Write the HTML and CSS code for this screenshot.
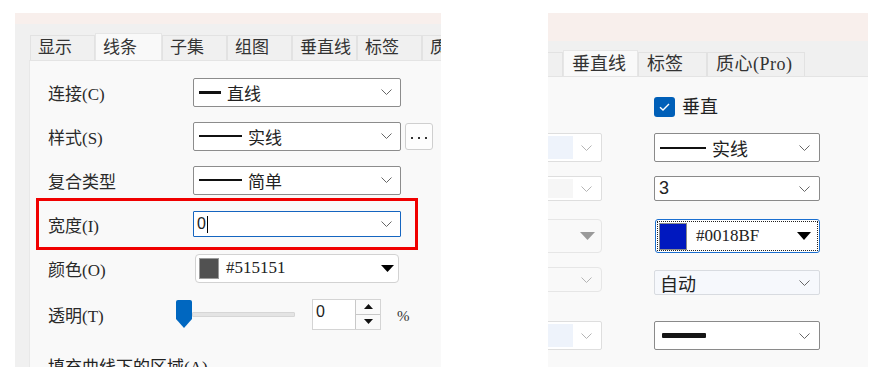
FILE: index.html
```html
<!DOCTYPE html>
<html lang="zh-CN">
<head>
<meta charset="utf-8">
<title>线条设置</title>
<link rel="stylesheet" href="styles.css">
</head>
<body>
<div class="stage">
  <section class="panel panel-left">
    <div class="titlebar"></div>
    <div class="tabbar">
      <div class="tab">显示</div>
      <div class="tab active">线条</div>
      <div class="tab">子集</div>
      <div class="tab">组图</div>
      <div class="tab">垂直线</div>
      <div class="tab">标签</div>
      <div class="tab">质心(Pro)</div>
    </div>
    <div class="body">
      <div class="page">
        <div class="row">
          <span class="lbl">连接(C)</span>
          <div class="combo">
            <span class="line thick"></span><span class="val">直线</span>
            <svg class="chev" width="11" height="6" viewBox="0 0 11 6"><polyline points="0.5,0.5 5.5,5.5 10.5,0.5"/></svg>
          </div>
        </div>
        <div class="row">
          <span class="lbl">样式(S)</span>
          <div class="combo">
            <span class="line thin"></span><span class="val">实线</span>
            <svg class="chev" width="11" height="6" viewBox="0 0 11 6"><polyline points="0.5,0.5 5.5,5.5 10.5,0.5"/></svg>
          </div>
          <div class="more"><span class="dot"></span><span class="dot"></span><span class="dot"></span></div>
        </div>
        <div class="row">
          <span class="lbl">复合类型</span>
          <div class="combo">
            <span class="line thin"></span><span class="val">简单</span>
            <svg class="chev" width="11" height="6" viewBox="0 0 11 6"><polyline points="0.5,0.5 5.5,5.5 10.5,0.5"/></svg>
          </div>
        </div>
        <div class="row row-mark">
          <span class="lbl">宽度(I)</span>
          <div class="combo edit">
            <span class="num">0</span><span class="caret"></span>
            <svg class="chev" width="11" height="6" viewBox="0 0 11 6"><polyline points="0.5,0.5 5.5,5.5 10.5,0.5"/></svg>
          </div>
        </div>
        <div class="row">
          <span class="lbl">颜色(O)</span>
          <div class="colorbox">
            <span class="swatch sw-grey"></span><span class="hex">#515151</span>
            <svg class="tri" width="13" height="7" viewBox="0 0 13 7"><polygon points="0,0 13,0 6.5,7"/></svg>
          </div>
        </div>
        <div class="row row-slide">
          <span class="lbl lbl-short">透明(T)</span>
          <div class="slider">
            <svg class="thumb" width="16" height="28" viewBox="0 0 16 28"><path d="M0 2 Q0 0 2 0 H14 Q16 0 16 2 V19 L8 28 L0 19 Z"/></svg>
            <span class="track"></span>
          </div>
          <div class="spin">
            <span class="num">0</span>
            <div class="spin-btns">
              <span class="sbtn"><svg width="9" height="5" viewBox="0 0 9 5"><polygon points="0,5 9,5 4.5,0"/></svg></span>
              <span class="sbtn"><svg width="9" height="5" viewBox="0 0 9 5"><polygon points="0,0 9,0 4.5,5"/></svg></span>
            </div>
          </div>
          <span class="pct">%</span>
        </div>
        <div class="row-cut">填充曲线下的区域(A)</div>
      </div>
    </div>
  </section>

  <section class="panel panel-right">
    <div class="titlebar tall"></div>
    <div class="tabbar r">
      <div class="tab stub"></div>
      <div class="tab active">垂直线</div>
      <div class="tab">标签</div>
      <div class="tab">质心(Pro)</div>
    </div>
    <div class="page r">
      <div class="rrow r1">
        <span></span>
        <div class="check">
          <svg width="21" height="20" viewBox="0 0 21 20"><rect x="0" y="0" width="21" height="20" rx="3" fill="#005fb8"/><path d="M6 10.2 L9 13 L15 7" fill="none" stroke="#fff" stroke-width="1.4"/></svg>
          <span>垂直</span>
        </div>
      </div>
      <div class="rrow r2">
        <div class="lc"><span class="fill blue"></span><svg class="chev light" width="11" height="6" viewBox="0 0 11 6"><polyline points="0.5,0.5 5.5,5.5 10.5,0.5"/></svg></div>
        <div class="combo rc">
          <span class="line thin w46"></span><span class="val">实线</span>
          <svg class="chev" width="11" height="6" viewBox="0 0 11 6"><polyline points="0.5,0.5 5.5,5.5 10.5,0.5"/></svg>
        </div>
      </div>
      <div class="rrow r3">
        <div class="lc"><span class="fill grey"></span><svg class="chev light" width="11" height="6" viewBox="0 0 11 6"><polyline points="0.5,0.5 5.5,5.5 10.5,0.5"/></svg></div>
        <div class="combo rc">
          <span class="num big">3</span>
          <svg class="chev" width="11" height="6" viewBox="0 0 11 6"><polyline points="0.5,0.5 5.5,5.5 10.5,0.5"/></svg>
        </div>
      </div>
      <div class="rrow r4">
        <div class="lc soft"><svg class="tri grey" width="15" height="8" viewBox="0 0 15 8"><polygon points="0,0 15,0 7.5,8"/></svg></div>
        <div class="colorbox rc focus">
          <div class="dotted">
            <span class="swatch sw-blue"></span><span class="hex">#0018BF</span>
            <svg class="tri" width="14" height="8" viewBox="0 0 14 8"><polygon points="0,0 14,0 7,8"/></svg>
          </div>
        </div>
      </div>
      <div class="rrow r5">
        <div class="lc soft top"><svg class="chev light" width="11" height="6" viewBox="0 0 11 6"><polyline points="0.5,0.5 5.5,5.5 10.5,0.5"/></svg></div>
        <div class="combo rc auto">
          <span class="val">自动</span>
          <svg class="chev" width="11" height="6" viewBox="0 0 11 6"><polyline points="0.5,0.5 5.5,5.5 10.5,0.5"/></svg>
        </div>
      </div>
      <div class="rrow r6">
        <div class="lc"><span class="fill blue"></span><svg class="chev light" width="11" height="6" viewBox="0 0 11 6"><polyline points="0.5,0.5 5.5,5.5 10.5,0.5"/></svg></div>
        <div class="combo rc">
          <span class="line heavy"></span>
          <svg class="chev" width="11" height="6" viewBox="0 0 11 6"><polyline points="0.5,0.5 5.5,5.5 10.5,0.5"/></svg>
        </div>
      </div>
    </div>
  </section>
</div>
</body>
</html>
```

FILE: styles.css
```css
* { box-sizing: border-box; }

html, body {
  margin: 0;
  padding: 0;
  background: #ffffff;
}

body {
  width: 874px;
  height: 371px;
  overflow: hidden;
  font-family: "Liberation Serif", "Noto Sans CJK SC", serif;
  color: #222;
}

.stage {
  display: flex;
  padding: 13px 0 0 15px;
  gap: 107px;
}

.panel {
  display: flex;
  flex-direction: column;
  height: 354px;
  overflow: hidden;
  background: #f0f0f0;
}

.panel-left { width: 426px; font-size: 17px; }
.panel-right { width: 320px; font-size: 18px; }

.titlebar {
  height: 11px;
  background: #f8efec;
  flex: none;
}
.titlebar.tall { height: 28px; }

/* tabs */
.tabbar {
  display: flex;
  align-items: flex-end;
  height: 36px;
  padding-left: 15px;
  flex: none;
  overflow: hidden;
  white-space: nowrap;
}
.tabbar.r { height: 35px; padding-left: 0; }

.tab {
  flex: none;
  width: 65px;
  height: 25px;
  padding-left: 7px;
  line-height: 23px;
  background: #f0f0f0;
  border: 1px solid #e2e2e2;
  border-bottom: none;
  color: #333;
}
.tab.active {
  width: 67px;
  height: 28px;
  line-height: 27px;
  background: #f9f9f9;
  border-color: #e6e6e6;
  position: relative;
  z-index: 1;
  margin-bottom: -1px;
}

.tabbar.r .tab { height: 24px; padding-left: 8px; line-height: 22px; }
.tabbar.r .tab.stub { width: 15px; border-left: none; }
.tabbar.r .tab.active { width: 75px; height: 27px; line-height: 27px; }
.tabbar.r .tab:nth-child(3) { width: 69px; }
.tabbar.r .tab:nth-child(4) { width: 98px; letter-spacing: 0.5px; }

/* left body */
.body {
  flex: 1;
  display: flex;
  padding-left: 14px;
  min-height: 0;
}

.page {
  flex: 1;
  background: #f9f9f9;
  border-top: 1px solid #e4e4e4;
  border-left: 1px solid #e8e8e8;
  padding: 9px 0 0 18px;
  overflow: hidden;
}

.row {
  display: flex;
  align-items: center;
  height: 44px;
}

.lbl {
  flex: none;
  width: 145px;
  color: #2a2a2a;
}
.lbl-short { width: 128px; }

.combo {
  flex: none;
  display: flex;
  align-items: center;
  width: 208px;
  height: 29px;
  padding-left: 5px;
  background: #fff;
  border: 1px solid #8c8c8c;
  border-radius: 2px;
}

.line {
  flex: none;
  display: block;
  background: #111;
}
.line.thick { width: 22px; height: 3px; }
.line.thin { width: 43px; height: 2px; }
.line.w46 { width: 46px; }
.line.heavy { width: 44px; height: 5px; margin-left: 2px; background: #151515; border-radius: 1px; }

.val { margin-left: 6px; }

.chev {
  margin-left: auto;
  margin-right: 8px;
  fill: none;
  stroke: #666;
  stroke-width: 1;
}
.chev.light { stroke: #b4b4b4; }

.more {
  flex: none;
  display: flex;
  align-items: center;
  justify-content: center;
  gap: 5px;
  width: 28px;
  height: 27px;
  margin-left: 4px;
  padding-top: 4px;
  border: 1px solid #cfcfcf;
  border-radius: 3px;
  background: #fdfdfd;
}
.dot {
  display: block;
  width: 2px;
  height: 2px;
  background: #333;
}

.combo.edit {
  height: 26px;
  padding-left: 3px;
  border: 1px solid #1565c0;
  border-radius: 1px;
}
.num {
  font-family: "Liberation Sans", "Noto Sans CJK SC", sans-serif;
  font-size: 16px;
  color: #222;
}
.num.big { font-size: 18px; margin-left: -1px; }
.caret {
  display: block;
  width: 1px;
  height: 17px;
  margin-left: 1px;
  background: #000;
}

.row-mark { position: relative; }
.row-mark::after {
  content: "";
  position: absolute;
  top: -4px;
  bottom: -4px;
  left: -12px;
  right: 23px;
  border: 3px solid #f00000;
}

.colorbox {
  flex: none;
  display: flex;
  align-items: center;
  width: 204px;
  height: 29px;
  margin-left: 2px;
  padding-left: 3px;
  background: #fff;
  border: 1px solid #d2d2d2;
  border-radius: 4px;
}
.swatch {
  flex: none;
  display: block;
  border: 1px solid #9a9a9a;
}
.sw-grey { width: 20px; height: 21px; background: #515151; }
.sw-blue { width: 28px; height: 27px; background: #0018bf; border-color: #8a8a8a; }
.hex { margin-left: 7px; }
.tri { margin-left: auto; margin-right: 4px; fill: #000; }
.tri.grey { fill: #9a9a9a; margin-right: 6px; }

.row-slide { margin-top: 2px; }
.slider {
  flex: none;
  display: flex;
  align-items: center;
  width: 119px;
}
.thumb { flex: none; fill: #0067c0; }
.track {
  flex: 1;
  height: 5px;
  background: #e4e4e4;
  border: 1px solid #d6d6d6;
  border-radius: 1px;
}

.spin {
  flex: none;
  display: flex;
  width: 69px;
  height: 31px;
  margin-left: 17px;
  background: #fff;
  border: 1px solid #d4d4d4;
}
.spin .num { flex: 1; padding: 2px 0 0 3px; line-height: 20px; }
.spin-btns {
  display: flex;
  flex-direction: column;
  width: 25px;
  border-left: 1px solid #c8c8c8;
}
.sbtn {
  flex: 1;
  display: flex;
  align-items: center;
  justify-content: center;
  background: #fafafa;
  border-bottom: 1px solid #c8c8c8;
}
.sbtn:last-child { border-bottom: none; }
.sbtn svg { fill: #111; }

.pct {
  margin-left: 16px;
  font-size: 15px;
  color: #333;
  padding-top: 4px;
}

.row-cut {
  margin-top: 22px;
  line-height: 20px;
}

/* right page */
.page.r {
  display: flex;
  flex-direction: column;
  padding: 0;
  border-left: none;
}

.rrow {
  display: grid;
  grid-template-columns: 54px 166px;
  column-gap: 52px;
  flex: none;
}
.r1 { height: 20px; margin-top: 20px; }
.r2 { height: 29px; margin-top: 16px; }
.r3 { height: 25px; margin-top: 14px; }
.r4 { height: 34px; margin-top: 18px; }
.r5 { height: 28px; margin-top: 14px; }
.r6 { height: 29px; margin-top: 26px; }

.check {
  display: flex;
  align-items: center;
  gap: 7px;
  line-height: 20px;
}
.check svg { flex: none; }

.lc {
  display: flex;
  align-items: center;
  width: 84px;
  margin-left: -30px;
  background: #fff;
  border: 1px solid #dedede;
  border-radius: 2px;
}
.lc .fill { display: block; align-self: stretch; width: 54px; margin: 2px 0; }
.lc .fill.blue { background: #eef3fb; }
.lc .fill.grey { background: #f6f6f6; }
.lc.soft { background: #f9f9f9; border-color: #e6e6e6; border-radius: 4px; }
.lc.top { height: 25px; align-self: start; }
.lc .chev { margin-right: 9px; }

.combo.rc {
  width: 166px;
  height: auto;
  padding-left: 5px;
  border-color: #8a8a8a;
}
.combo.rc .chev { margin-right: 9px; }
.combo.auto {
  height: 25px;
  align-self: end;
  background: #f6f8fc;
  border-color: #d8dbe0;
}
.combo.auto .val { margin-left: 0; }

.colorbox.rc.focus {
  width: 165px;
  height: 34px;
  margin-left: 1px;
  padding: 1px;
  border: 1px solid #1a6fd0;
  border-radius: 3px;
}
.dotted {
  flex: 1;
  align-self: stretch;
  display: flex;
  align-items: center;
  padding-left: 1px;
  border: 1px dotted #222;
}
.dotted .hex { margin-left: 9px; font-size: 17px; }
.dotted .tri { margin-right: 6px; }
```
